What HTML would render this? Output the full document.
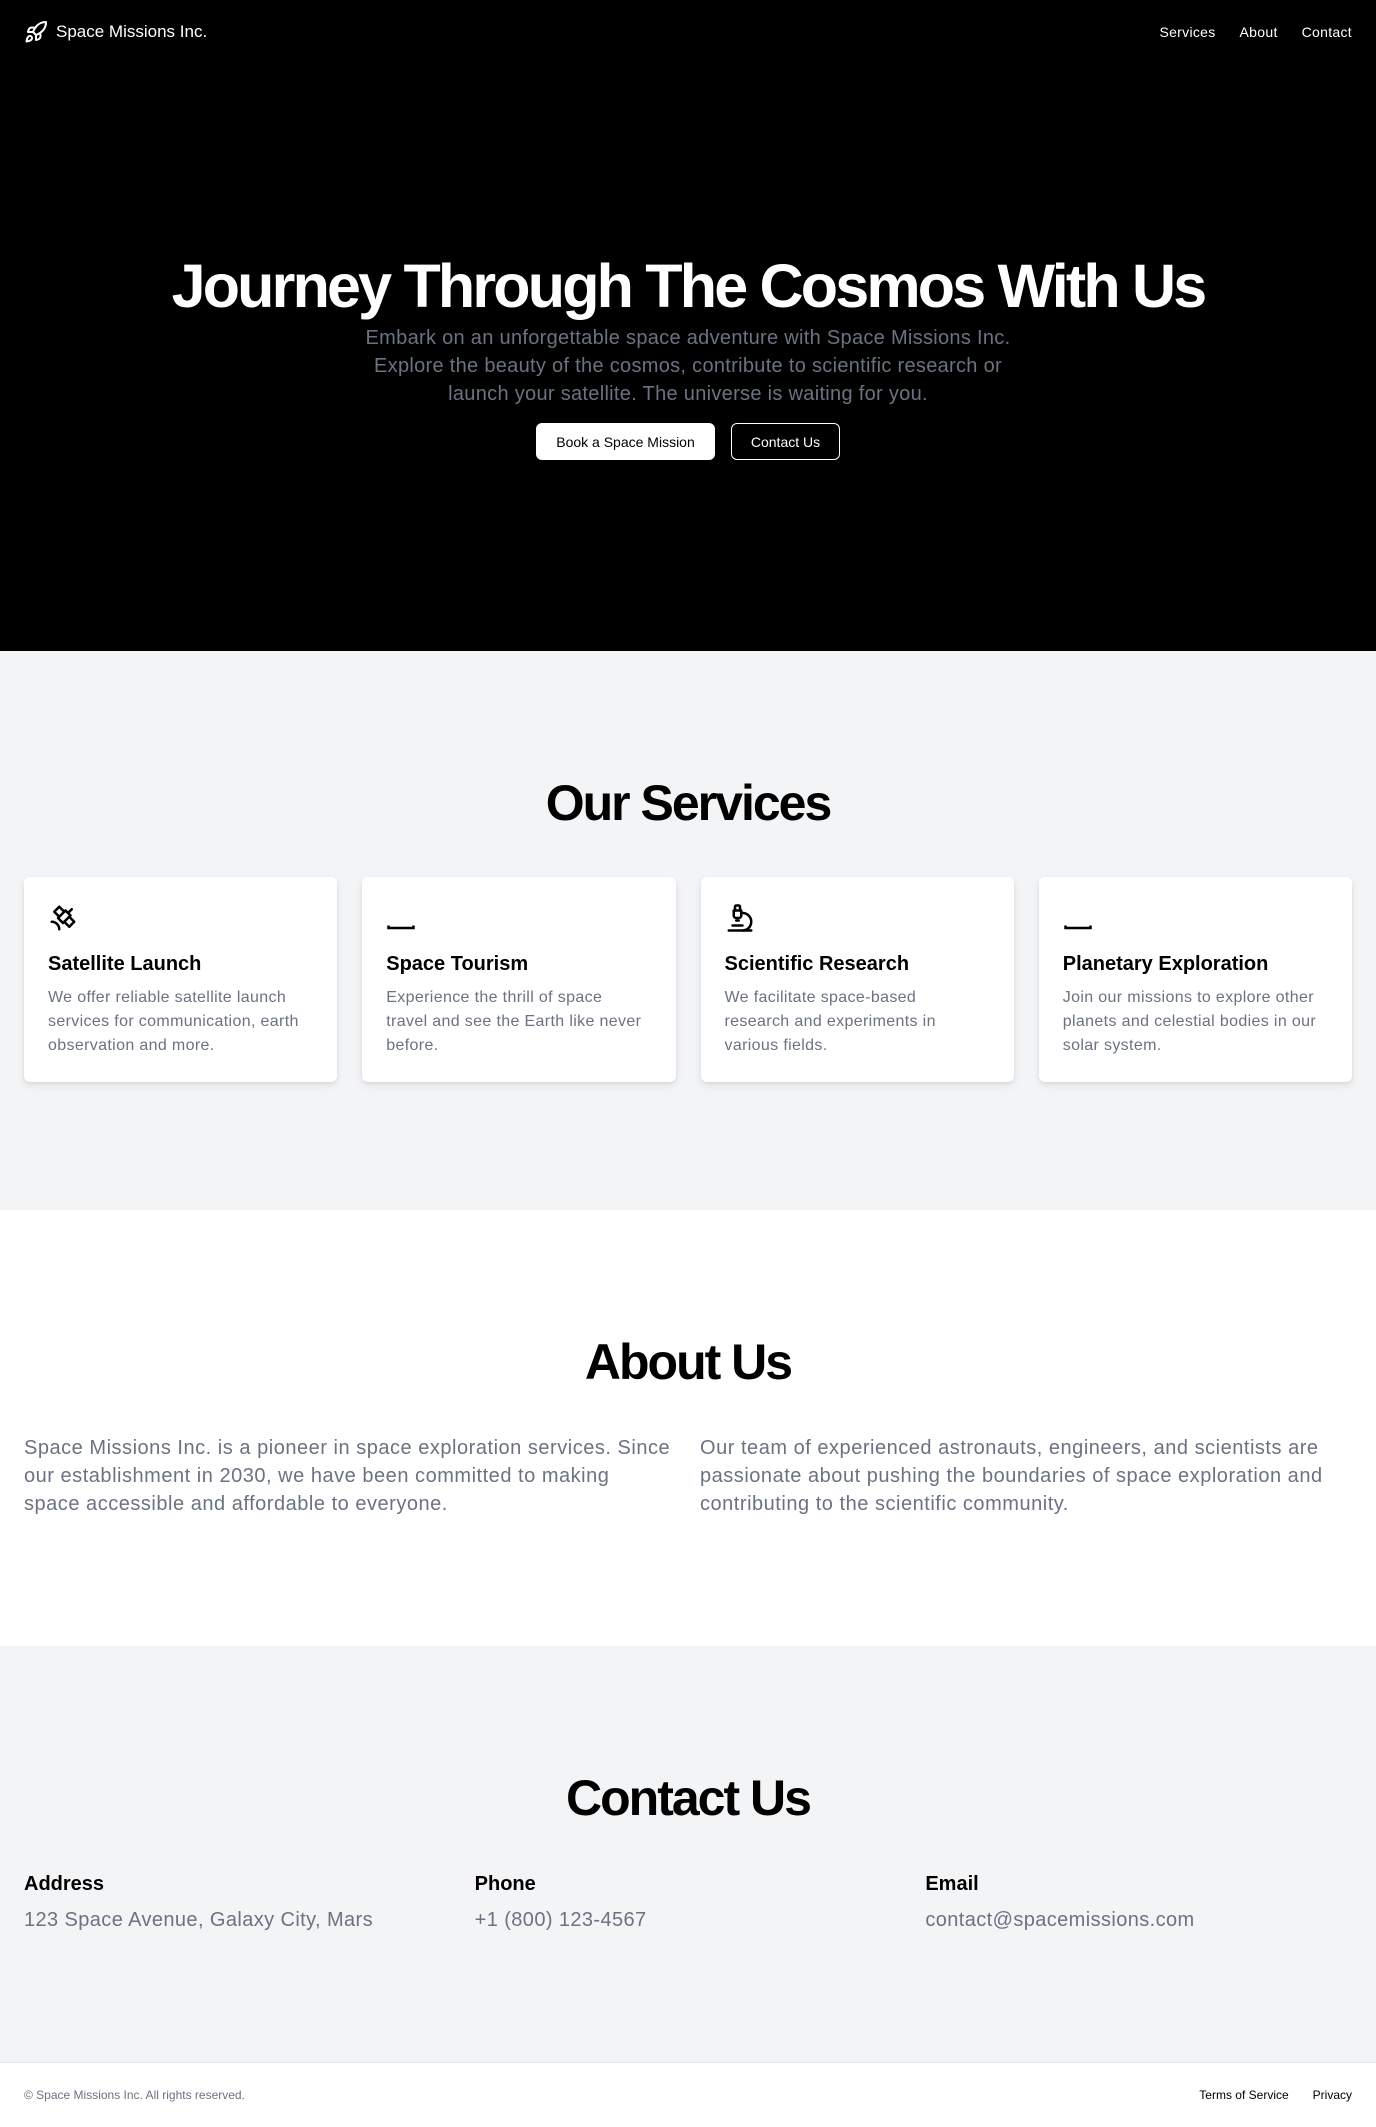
<!DOCTYPE html>
<html><head><meta charset="utf-8"><style>
*{box-sizing:border-box;margin:0;padding:0}
body{width:1376px;font-family:"Liberation Sans",sans-serif;color:#000;background:#fff}
.hero{background:#000;height:651px;position:relative;color:#fff}
.nav{position:absolute;top:0;left:0;right:0;height:64px;display:flex;align-items:center;justify-content:space-between;padding:0 24px}
.brand{display:flex;align-items:center;gap:8px;font-size:17px}
.links{display:flex;gap:24px;font-size:14px;letter-spacing:.3px}
.hero h1{position:absolute;top:254px;left:0;right:0;text-align:center;font-size:61px;font-weight:bold;letter-spacing:-2.8px;line-height:64px}
.sub{position:absolute;top:324px;left:0;right:0;width:680px;margin:0 auto;text-align:center;font-size:20px;line-height:28px;color:#6b7280;letter-spacing:.3px}
.btns{position:absolute;top:423px;left:0;right:0;display:flex;justify-content:center;gap:16px}
.btn{height:37px;border-radius:6px;font-size:14px;display:flex;align-items:center;padding:0 16px}
.b1{background:#fff;color:#000;width:179px;justify-content:center}
.b2{border:1px solid #fff;color:#fff;width:109px;justify-content:center}
section{padding:128px 24px}
.gray{background:#f3f4f6}
h2{text-align:center;font-size:50px;line-height:48px;font-weight:bold;letter-spacing:-2px}
.cards{display:grid;grid-template-columns:repeat(4,1fr);gap:25px;margin-top:50px}
.card{background:#fff;border-radius:6px;box-shadow:0 4px 8px rgba(0,0,0,.08),0 1px 3px rgba(0,0,0,.06);padding:24px;height:205px}
.card svg{display:block;margin-top:2px;height:30px}
.card h3{font-size:20px;font-weight:600;margin-top:17px;line-height:28px}
.card p{font-size:16px;line-height:24px;color:#6b7280;margin-top:8px;letter-spacing:.35px;padding-right:4px}
.about{display:grid;grid-template-columns:1fr 1fr;gap:24px;margin-top:48px;font-size:20px;line-height:28px;color:#6b7280;letter-spacing:.52px}
.contact{display:grid;grid-template-columns:repeat(3,1fr);gap:24px;margin-top:48px}
.contact h4{font-size:20px;line-height:28px;font-weight:600}
.contact p{font-size:20px;line-height:28px;color:#6b7280;margin-top:8px;letter-spacing:.4px}
footer{height:64px;border-top:1px solid #e5e7eb;display:flex;align-items:center;justify-content:space-between;padding:0 24px;font-size:12px}
footer .c{color:#6b7280}
footer .l{display:flex;gap:24px}
</style></head><body>
<div class="hero">
<div class="nav"><div class="brand"><svg width="24" height="24" viewBox="0 0 24 24" fill="none" stroke="#fff" stroke-width="2" stroke-linecap="round" stroke-linejoin="round"><path d="M4.5 16.5c-1.5 1.26-2 5-2 5s3.74-.5 5-2c.71-.84.7-2.13-.09-2.91a2.18 2.18 0 0 0-2.91-.09z"/><path d="m12 15-3-3a22 22 0 0 1 2-3.95A12.88 12.88 0 0 1 22 2c0 2.72-.78 7.5-6 11a22.35 22.35 0 0 1-4 2z"/><path d="M9 12H4s.55-3.03 2-4c1.62-1.08 5 0 5 0"/><path d="M12 15v5s3.03-.55 4-2c1.08-1.62 0-5 0-5"/></svg>Space Missions Inc.</div>
<div class="links"><span>Services</span><span>About</span><span>Contact</span></div></div>
<h1>Journey Through The Cosmos With Us</h1>
<p class="sub">Embark on an unforgettable space adventure with Space Missions Inc. Explore the beauty of the cosmos, contribute to scientific research or launch your satellite. The universe is waiting for you.</p>
<div class="btns"><div class="btn b1">Book a Space Mission</div><div class="btn b2">Contact Us</div></div>
</div>
<section class="gray">
<h2>Our Services</h2>
<div class="cards">
<div class="card"><svg width="30" height="30" viewBox="0 0 24 24" fill="none" stroke="#000" stroke-width="2" stroke-linecap="round" stroke-linejoin="round"><path d="M13 7 9 3 5 7l4 4"/><path d="m17 11 4 4-4 4-4-4"/><path d="m8 12 4 4 6-6-4-4Z"/><path d="m16 8 3-3"/><path d="M9 21a6 6 0 0 0-6-6"/></svg><h3>Satellite Launch</h3><p>We offer reliable satellite launch services for communication, earth observation and more.</p></div>
<div class="card"><svg width="30" height="30" viewBox="0 0 24 24" fill="none" stroke="#000" stroke-width="2"><path d="M2 18v2h20v-2"/></svg><h3>Space Tourism</h3><p>Experience the thrill of space travel and see the Earth like never before.</p></div>
<div class="card"><svg width="30" height="30" viewBox="0 0 24 24" fill="none" stroke="#000" stroke-width="2" stroke-linecap="round" stroke-linejoin="round"><path d="M6 18h8"/><path d="M3 22h18"/><path d="M14 22a7 7 0 1 0 0-14h-1"/><path d="M9 14h2"/><path d="M9 12a2 2 0 0 1-2-2V6h6v4a2 2 0 0 1-2 2Z"/><path d="M12 6V3a1 1 0 0 0-1-1H9a1 1 0 0 0-1 1v3"/></svg><h3>Scientific Research</h3><p>We facilitate space-based research and experiments in various fields.</p></div>
<div class="card"><svg width="30" height="30" viewBox="0 0 24 24" fill="none" stroke="#000" stroke-width="2"><path d="M2 18v2h20v-2"/></svg><h3>Planetary Exploration</h3><p>Join our missions to explore other planets and celestial bodies in our solar system.</p></div>
</div>
</section>
<section>
<h2>About Us</h2>
<div class="about"><p>Space Missions Inc. is a pioneer in space exploration services. Since<br>our establishment in 2030, we have been committed to making<br>space accessible and affordable to everyone.</p><p>Our team of experienced astronauts, engineers, and scientists are passionate about pushing the boundaries of space exploration and contributing to the scientific community.</p></div>
</section>
<section class="gray">
<h2>Contact Us</h2>
<div class="contact"><div><h4>Address</h4><p>123 Space Avenue, Galaxy City, Mars</p></div><div><h4>Phone</h4><p>+1 (800) 123-4567</p></div><div><h4>Email</h4><p>contact@spacemissions.com</p></div></div>
</section>
<footer><span class="c">© Space Missions Inc. All rights reserved.</span><div class="l"><span>Terms of Service</span><span>Privacy</span></div></footer>
</body></html>
